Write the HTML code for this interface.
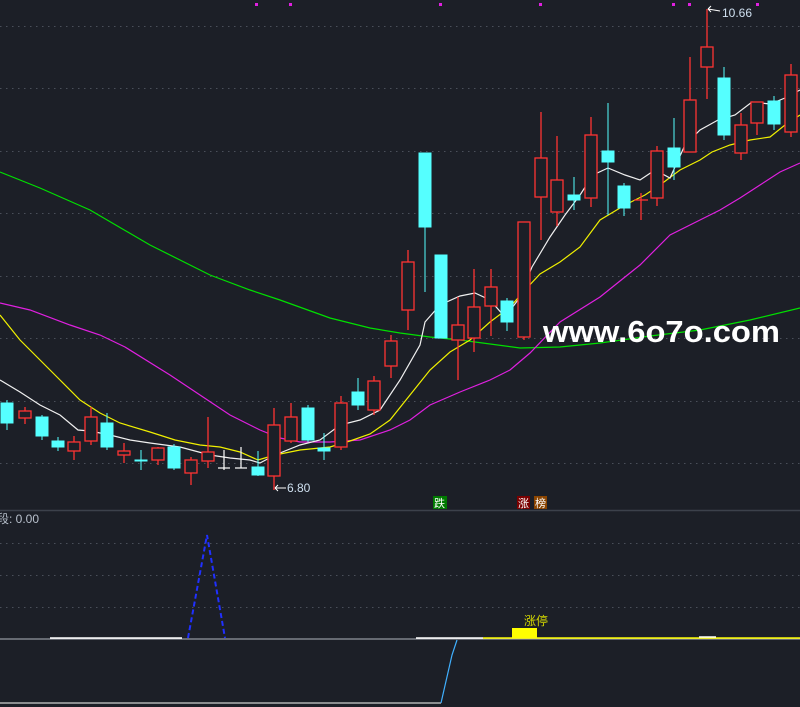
<!DOCTYPE html>
<html><head><meta charset="utf-8"><style>
html,body{margin:0;padding:0;background:#1c1f27;}
svg{display:block;}
text{font-family:"Liberation Sans","Noto Sans CJK SC",sans-serif;}
</style></head><body>
<svg width="800" height="707" viewBox="0 0 800 707" xmlns="http://www.w3.org/2000/svg">
<rect width="800" height="707" fill="#1c1f27"/>
<g stroke="#4a4f5a" stroke-width="1" stroke-dasharray="1.5 4.5">
<line x1="0" y1="26.5" x2="800" y2="26.5"/><line x1="0" y1="88.5" x2="800" y2="88.5"/>
<line x1="0" y1="151.5" x2="800" y2="151.5"/><line x1="0" y1="213.5" x2="800" y2="213.5"/>
<line x1="0" y1="276.5" x2="800" y2="276.5"/><line x1="0" y1="338.5" x2="800" y2="338.5"/>
<line x1="0" y1="401.5" x2="800" y2="401.5"/><line x1="0" y1="463.5" x2="800" y2="463.5"/>
<line x1="0" y1="543.5" x2="800" y2="543.5"/><line x1="0" y1="575.5" x2="800" y2="575.5"/>
<line x1="0" y1="607.5" x2="800" y2="607.5"/>
</g>
<line x1="0" y1="510.5" x2="800" y2="510.5" stroke="#3c414b" stroke-width="1.5"/>
<g fill="#e020e0"><rect x="255" y="3" width="3" height="3"/><rect x="289" y="3" width="3" height="3"/><rect x="439" y="3" width="3" height="3"/><rect x="539" y="3" width="3" height="3"/><rect x="672" y="3" width="3" height="3"/><rect x="688" y="3" width="3" height="3"/><rect x="756" y="3" width="3" height="3"/></g>
<g fill="none" stroke-width="1.2">
<polyline stroke="#00e000" points="0,172 40,188 90,210 150,245 210,275 250,290 280,300 330,318 370,328 400,333 430,337 460,340 520,348 560,347 600,343 650,336 700,330 750,320 800,308"/>
<polyline stroke="#e020e0" points="0,303 30,310 70,325 100,335 125,347 170,375 200,395 230,415 260,430 280,438 300,442 330,442 360,440 390,430 410,420 430,405 460,392 490,380 510,370 530,353 560,322 600,297 640,265 670,235 700,220 720,210 740,198 760,185 780,172 800,163"/>
<polyline stroke="#f0f000" points="0,315 20,340 40,360 60,380 80,400 100,413 120,423 150,432 175,440 200,445 220,447 240,452 258,460 275,455 300,450 330,447 350,441 370,434 390,420 410,395 430,370 450,352 470,340 490,322 510,307 525,290 540,274 560,262 580,247 600,220 625,205 645,195 660,185 680,170 700,160 712,152 730,145 750,140 770,137 785,125 800,115"/>
<polyline stroke="#f0f0f0" points="0,380 20,392 40,405 60,415 78,430 90,431 110,435 130,440 150,443 180,447 210,455 230,458 250,460 260,463 275,455 300,445 320,440 340,425 360,420 380,410 400,380 420,345 425,322 440,305 460,296 475,293 490,300 505,317 518,300 532,267 550,237 565,215 580,195 593,175 608,168 625,175 640,180 655,170 670,178 685,145 700,130 718,120 735,115 752,102 770,104 785,98 800,90"/>
</g>
<g fill="#55ffff" stroke="#55ffff" stroke-width="1">
<line x1="7" y1="400" x2="7" y2="430"/><rect x="1" y="403" width="12" height="20"/>
<line x1="42" y1="415" x2="42" y2="440"/><rect x="36" y="417" width="12" height="19"/>
<line x1="58" y1="437" x2="58" y2="451"/><rect x="52" y="441" width="12" height="6"/>
<line x1="107" y1="413" x2="107" y2="450"/><rect x="101" y="423" width="12" height="24"/>
<line x1="141" y1="450" x2="141" y2="470"/><rect x="135" y="460" width="12" height="1"/>
<line x1="174" y1="444" x2="174" y2="470"/><rect x="168" y="447" width="12" height="21"/>
<line x1="258" y1="451" x2="258" y2="476"/><rect x="252" y="467" width="12" height="8"/>
<line x1="308" y1="405" x2="308" y2="442"/><rect x="302" y="408" width="12" height="32"/>
<line x1="324" y1="433" x2="324" y2="460"/><rect x="318" y="448" width="12" height="3"/>
<line x1="358" y1="378" x2="358" y2="410"/><rect x="352" y="392" width="12" height="13"/>
<line x1="425" y1="153" x2="425" y2="292"/><rect x="419" y="153" width="12" height="74"/>
<line x1="441" y1="255" x2="441" y2="338"/><rect x="435" y="255" width="12" height="83"/>
<line x1="507" y1="298" x2="507" y2="331"/><rect x="501" y="301" width="12" height="21"/>
<line x1="574" y1="177" x2="574" y2="210"/><rect x="568" y="195" width="12" height="5"/>
<line x1="608" y1="103" x2="608" y2="215"/><rect x="602" y="151" width="12" height="11"/>
<line x1="624" y1="183" x2="624" y2="216"/><rect x="618" y="186" width="12" height="22"/>
<line x1="674" y1="118" x2="674" y2="180"/><rect x="668" y="148" width="12" height="19"/>
<line x1="724" y1="67" x2="724" y2="140"/><rect x="718" y="78" width="12" height="57"/>
<line x1="774" y1="96" x2="774" y2="130"/><rect x="768" y="101" width="12" height="23"/>
</g>
<g fill="none" stroke="#ff3333" stroke-width="1.3">
<line x1="25" y1="407" x2="25" y2="424"/><rect x="19" y="411" width="12" height="7" fill="#1c1f27"/>
<line x1="74" y1="436" x2="74" y2="460"/><rect x="68" y="442" width="12" height="9" fill="#1c1f27"/>
<line x1="91" y1="407" x2="91" y2="445"/><rect x="85" y="417" width="12" height="24" fill="#1c1f27"/>
<line x1="124" y1="443" x2="124" y2="463"/><rect x="118" y="451" width="12" height="4" fill="#1c1f27"/>
<line x1="158" y1="447" x2="158" y2="465"/><rect x="152" y="448" width="12" height="12" fill="#1c1f27"/>
<line x1="191" y1="457" x2="191" y2="485"/><rect x="185" y="460" width="12" height="13" fill="#1c1f27"/>
<line x1="208" y1="417" x2="208" y2="468"/><rect x="202" y="452" width="12" height="9" fill="#1c1f27"/>
<line x1="274" y1="408" x2="274" y2="490"/><rect x="268" y="425" width="12" height="51" fill="#1c1f27"/>
<line x1="291" y1="403" x2="291" y2="443"/><rect x="285" y="417" width="12" height="24" fill="#1c1f27"/>
<line x1="341" y1="396" x2="341" y2="450"/><rect x="335" y="403" width="12" height="44" fill="#1c1f27"/>
<line x1="374" y1="376" x2="374" y2="415"/><rect x="368" y="381" width="12" height="29" fill="#1c1f27"/>
<line x1="391" y1="335" x2="391" y2="378"/><rect x="385" y="341" width="12" height="25" fill="#1c1f27"/>
<line x1="408" y1="250" x2="408" y2="330"/><rect x="402" y="262" width="12" height="48" fill="#1c1f27"/>
<line x1="458" y1="297" x2="458" y2="380"/><rect x="452" y="325" width="12" height="15" fill="#1c1f27"/>
<line x1="474" y1="269" x2="474" y2="352"/><rect x="468" y="307" width="12" height="31" fill="#1c1f27"/>
<line x1="491" y1="269" x2="491" y2="336"/><rect x="485" y="287" width="12" height="19" fill="#1c1f27"/>
<line x1="524" y1="222" x2="524" y2="340"/><rect x="518" y="222" width="12" height="115" fill="#1c1f27"/>
<line x1="541" y1="112" x2="541" y2="240"/><rect x="535" y="158" width="12" height="39" fill="#1c1f27"/>
<line x1="557" y1="136" x2="557" y2="226"/><rect x="551" y="180" width="12" height="32" fill="#1c1f27"/>
<line x1="591" y1="117" x2="591" y2="207"/><rect x="585" y="135" width="12" height="63" fill="#1c1f27"/>
<line x1="641" y1="193" x2="641" y2="220"/><line x1="634" y1="200" x2="648" y2="200"/>
<line x1="657" y1="146" x2="657" y2="206"/><rect x="651" y="151" width="12" height="47" fill="#1c1f27"/>
<line x1="690" y1="57" x2="690" y2="152"/><rect x="684" y="100" width="12" height="52" fill="#1c1f27"/>
<line x1="707" y1="9" x2="707" y2="99"/><rect x="701" y="47" width="12" height="20" fill="#1c1f27"/>
<line x1="741" y1="113" x2="741" y2="160"/><rect x="735" y="125" width="12" height="28" fill="#1c1f27"/>
<line x1="757" y1="102" x2="757" y2="135"/><rect x="751" y="102" width="12" height="21" fill="#1c1f27"/>
<line x1="791" y1="64" x2="791" y2="137"/><rect x="785" y="75" width="12" height="57" fill="#1c1f27"/>
</g>
<g stroke="#ffffff" stroke-width="1.2">
<line x1="224" y1="450" x2="224" y2="470"/><line x1="218" y1="468" x2="230" y2="468"/>
<line x1="241" y1="447" x2="241" y2="468"/><line x1="235" y1="468" x2="247" y2="468"/>
</g>
<text x="722" y="17" font-size="12" fill="#cfe0f0">10.66</text>
<path d="M708 9 L711 6 M708 9 L711 12 M708 9 L720 11" stroke="#fff" fill="none"/>
<text x="287" y="492" font-size="12" fill="#cfe0f0">6.80</text>
<path d="M275 488 L278 485 M275 488 L278 491 M275 488 L286 488" stroke="#fff" fill="none"/>
<text x="543" y="342" font-size="31" font-weight="bold" fill="#ffffff" textLength="237" lengthAdjust="spacingAndGlyphs">www.6o7o.com</text>
<rect x="433" y="496" width="14" height="13" fill="#007a00"/><text x="434" y="507" font-size="11" fill="#fff">跌</text>
<rect x="517" y="496" width="13" height="13" fill="#7a0000"/><text x="518" y="507" font-size="11" fill="#fff">涨</text>
<rect x="534" y="496" width="13" height="13" fill="#8a4400"/><text x="535" y="507" font-size="11" fill="#fff">榜</text>
<text x="-3" y="523" font-size="12" fill="#b8c0cc">段: 0.00</text>
<line x1="0" y1="639" x2="800" y2="639" stroke="#b0b4bc" stroke-width="1"/>
<line x1="50" y1="638" x2="182" y2="638" stroke="#ffffff" stroke-width="1.5"/>
<line x1="416" y1="638" x2="483" y2="638" stroke="#ffffff" stroke-width="1.5"/>
<line x1="483" y1="638" x2="800" y2="638" stroke="#ffff00" stroke-width="1.5"/>
<rect x="512" y="628" width="25" height="10" fill="#ffff00"/>
<line x1="699" y1="637" x2="716" y2="637" stroke="#fff" stroke-width="1.5"/>
<text x="524" y="625" font-size="12" fill="#d4d800">涨停</text>
<polyline points="188,638 207,535 225,638" fill="none" stroke="#2030ff" stroke-width="2" stroke-dasharray="5 3"/>
<line x1="0" y1="703" x2="441" y2="703" stroke="#d0d0d0" stroke-width="1.2"/>
<polyline points="441,703 452,655 457,640" fill="none" stroke="#40b0ff" stroke-width="1.2"/>
</svg>
</body></html>
